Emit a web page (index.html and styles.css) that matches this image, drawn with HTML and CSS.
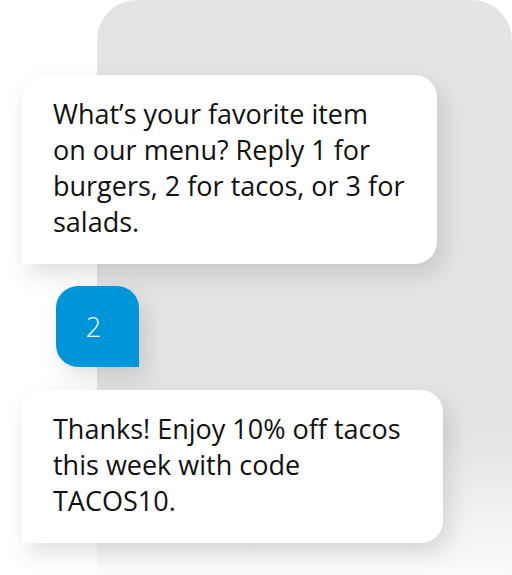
FILE: index.html
```html
<!DOCTYPE html>
<html lang="en">
<head>
    <meta charset="UTF-8">
    <meta name="viewport" content="width=device-width, initial-scale=1.0">
    <title>SMS Chat</title>
    <link rel="stylesheet" href="styles.css">
</head>
<body>
    <div class="chat-panel">
        <div class="bubble incoming first">
            What’s your favorite item<br>on our menu? Reply 1 for<br>burgers, 2 for tacos, or 3 for<br>salads.
        </div>
        <div class="bubble reply">2</div>
        <div class="bubble incoming last">
            Thanks! Enjoy 10% off tacos<br>this week with code<br>TACOS10.
        </div>
    </div>
</body>
</html>
```

FILE: styles.css
```css
*{
    margin: 0;
    padding: 0;
    box-sizing: border-box;
}
body{
    width: 512px;
    height: 575px;
    overflow: hidden;
    background: #fff;
    font-family: "Open Sans", "Noto Sans", sans-serif;
}
.chat-panel{
    margin-left: 97px;
    width: 415px;
    height: 575px;
    padding-top: 75px;
    border-radius: 40px 40px 0 0;
    background: linear-gradient(180deg, #e4e4e4 0%, #e4e4e4 75%, #fbfbfb 100%);
}
.bubble{
    background-color: #fff;
    box-shadow: 6px 10px 24px rgba(0, 0, 0, 0.13);
}
.incoming{
    margin-left: -75px;
    padding: 21px 10px 24px 31px;
    font-size: 27px;
    line-height: 36px;
    white-space: nowrap;
    color: #111;
    border-radius: 22px 22px 22px 0;
}
.first{
    width: 415px;
}
.last{
    width: 421px;
}
.reply{
    margin: 22px 0 23px -41px;
    width: 83px;
    height: 81px;
    padding-right: 8px;
    display: flex;
    align-items: center;
    justify-content: center;
    background-color: #0095d8;
    color: #fff;
    font-size: 27px;
    font-weight: 300;
    border-radius: 22px 22px 0 22px;
}
```
